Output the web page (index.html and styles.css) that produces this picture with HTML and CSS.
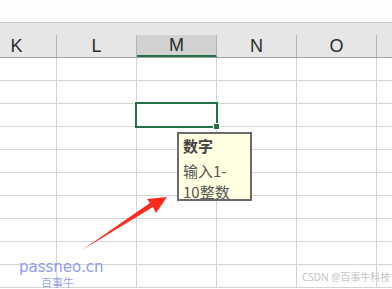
FILE: index.html
```html
<!DOCTYPE html>
<html lang="zh">
<head>
    <meta charset="UTF-8">
    <title>数据验证提示</title>
    <link rel="stylesheet" href="styles.css">
</head>
<body>

<div class="topbar"></div>

<div class="sheet">
    <div class="col-head">
        <div class="hcell">K</div>
        <div class="hcell">L</div>
        <div class="hcell active">M</div>
        <div class="hcell">N</div>
        <div class="hcell">O</div>
        <div class="hcell"></div>
    </div>

    <div class="row"><div class="cell"></div><div class="cell"></div><div class="cell"></div><div class="cell"></div><div class="cell"></div><div class="cell"></div></div>
    <div class="row"><div class="cell"></div><div class="cell"></div><div class="cell"></div><div class="cell"></div><div class="cell"></div><div class="cell"></div></div>
    <div class="row">
        <div class="cell"></div>
        <div class="cell"></div>
        <div class="cell selected">
            <div class="sel-box"><span class="fill-handle"></span></div>
        </div>
        <div class="cell"></div>
        <div class="cell"></div>
        <div class="cell"></div>
    </div>
    <div class="row"><div class="cell"></div><div class="cell"></div><div class="cell"></div><div class="cell"></div><div class="cell"></div><div class="cell"></div></div>
    <div class="row"><div class="cell"></div><div class="cell"></div><div class="cell"></div><div class="cell"></div><div class="cell"></div><div class="cell"></div></div>
    <div class="row"><div class="cell"></div><div class="cell"></div><div class="cell"></div><div class="cell"></div><div class="cell"></div><div class="cell"></div></div>
    <div class="row"><div class="cell"></div><div class="cell"></div><div class="cell"></div><div class="cell"></div><div class="cell"></div><div class="cell"></div></div>
    <div class="row"><div class="cell"></div><div class="cell"></div><div class="cell"></div><div class="cell"></div><div class="cell"></div><div class="cell"></div></div>
    <div class="row"><div class="cell"></div><div class="cell"></div><div class="cell"></div><div class="cell"></div><div class="cell"></div><div class="cell"></div></div>
    <div class="row"><div class="cell"></div><div class="cell"></div><div class="cell"></div><div class="cell"></div><div class="cell"></div><div class="cell"></div></div>
</div>

<!-- подсказка проверки данных -->
<div class="tip">
    <div class="tip-title">数字</div>
    <div class="tip-text">输入1-<br>10整数</div>
</div>

<svg class="arrow" width="392" height="289" viewBox="0 0 392 289">
    <polygon points="167,197 147,199 150,203 82,250 153,207 156,213" fill="#fb2a1c"/>
</svg>

<div class="wm-site">passneo.cn</div>
<div class="wm-name">百事牛</div>
<div class="wm-csdn">CSDN @百事牛科技</div>

</body>
</html>
```

FILE: styles.css
```css
html {
    overflow: hidden;
}

body {
    margin: 0;
    padding: 0;
    width: 392px;
    height: 289px;
    overflow: hidden;
    position: relative;
    background: #fff;
    font-family: 'Liberation Sans', Arial, sans-serif;
}

.topbar {
    height: 22px;
    background: #fdfdfd;
    border-bottom: 1px solid #c6c6c6;
}

.sheet {
    margin-left: -23px;
    width: 415px;
}

.col-head {
    display: grid;
    grid-template-columns: repeat(5, 80px) 15px;
    padding-top: 12px;
    background: #e6e6e6;
    border-bottom: 1px solid #a3a3a3;
}

.hcell {
    height: 22px;
    line-height: 23px;
    text-align: center;
    font-size: 18px;
    color: #2b2b2b;
    border-right: 1px solid #b4b4b4;
    box-sizing: border-box;
}

.hcell:last-child {
    border-right: none;
}

.hcell.active {
    background: #d2d2d2;
    border-bottom: 2px solid #217346;
    line-height: 21px;
}

.row {
    display: grid;
    grid-template-columns: repeat(5, 80px) 15px;
}

.cell {
    height: 23px;
    box-sizing: border-box;
    border-right: 1px solid #d4d4d4;
    border-bottom: 1px solid #d4d4d4;
}

.cell:last-child {
    border-right: none;
}

.cell.selected {
    position: relative;
}

.sel-box {
    position: absolute;
    left: -2px;
    top: -2px;
    width: 83px;
    height: 26px;
    box-sizing: border-box;
    border: 2px solid #217346;
}

.fill-handle {
    position: absolute;
    right: -4px;
    bottom: -4px;
    width: 5px;
    height: 5px;
    background: #217346;
    border: 1px solid #fff;
}

.tip {
    position: absolute;
    left: 177px;
    top: 132px;
    width: 75px;
    height: 69px;
    box-sizing: border-box;
    border: 2px solid #6a6a6a;
    background: #ffffe1;
    padding: 1px 0 0 4px;
    font-family: 'Noto Sans CJK SC', 'Noto Sans', sans-serif;
    font-size: 15px;
    line-height: 21px;
}

.tip-title {
    font-weight: bold;
    color: #444;
    margin-bottom: 4px;
}

.tip-text {
    color: #555;
}

.arrow {
    position: absolute;
    left: 0;
    top: 0;
}

.wm-site {
    position: absolute;
    left: 19px;
    top: 260px;
    font-family: 'DejaVu Sans', sans-serif;
    font-size: 15px;
    line-height: 15px;
    color: #8d9cf3;
}

.wm-name {
    position: absolute;
    left: 41px;
    top: 277px;
    font-family: 'Noto Sans CJK SC', sans-serif;
    font-size: 11px;
    line-height: 10px;
    color: #98a3e4;
}

.wm-csdn {
    position: absolute;
    left: 302px;
    top: 272px;
    white-space: nowrap;
    font-family: 'Noto Sans', 'Noto Sans CJK SC', sans-serif;
    font-size: 10px;
    line-height: 11px;
    color: #c4c4c4;
}
```
